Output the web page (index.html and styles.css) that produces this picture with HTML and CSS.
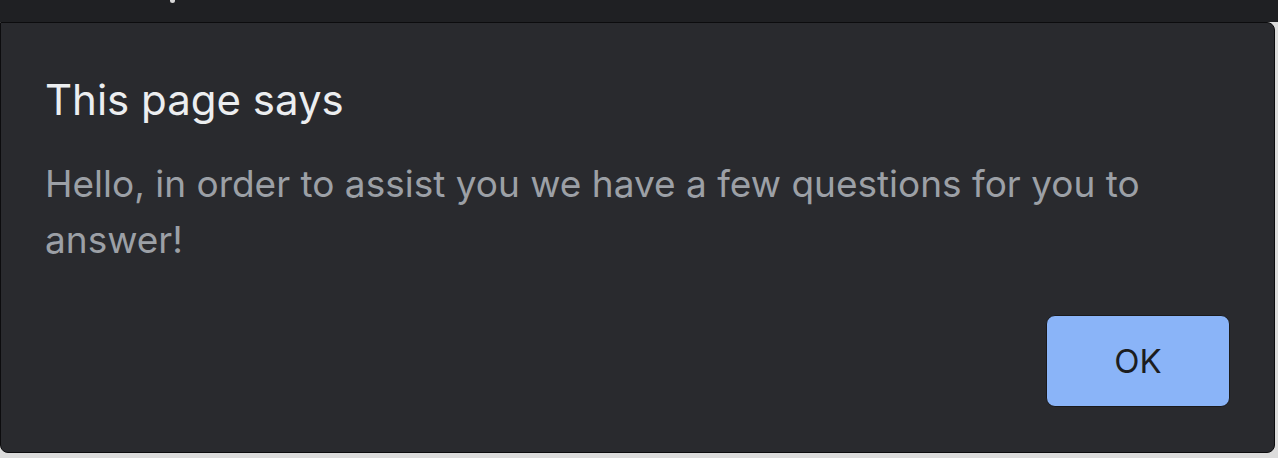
FILE: index.html
```html
<!DOCTYPE html>
<html lang="en">
<head>
<meta charset="utf-8">
<title>This page says</title>
<link rel="stylesheet" href="styles.css">
</head>
<body>
<div class="topbar"><span class="dot"></span></div>
<div class="dialog">
  <h1 class="title">This page says</h1>
  <p class="message">Hello, in order to assist you we have a few questions for you to answer!</p>
  <div class="actions">
    <button class="ok">OK</button>
  </div>
</div>
</body>
</html>
```

FILE: styles.css
```css
html, body {
  margin: 0;
  padding: 0;
}
body {
  width: 1278px;
  height: 458px;
  overflow: hidden;
  background: #dcdcdc;
  font-family: Inter, Roboto, "Liberation Sans", sans-serif;
}
.topbar {
  height: 22px;
  background: #1f2023;
  position: relative;
}
.dot {
  position: absolute;
  left: 170px;
  top: 0;
  width: 5px;
  height: 3px;
  border-radius: 0 0 3px 3px;
  background: #d8d8d8;
}
.dialog {
  box-sizing: border-box;
  width: 1275px;
  height: 431px;
  background: #292a2e;
  border: 1px solid #0c0c0e;
  border-radius: 0 8px 8px 8px;
  padding: 0 44px 0 44px;
  display: flex;
  flex-direction: column;
}
.title {
  margin: 50px 0 0 0;
  font-size: 42px;
  font-weight: 400;
  line-height: 54px;
  color: #eceef0;
}
.message {
  margin: 29px 0 0 0;
  font-size: 37px;
  line-height: 56px;
  color: #9ca0a6;
}
.actions {
  margin-top: auto;
  margin-bottom: 45px;
  display: flex;
  justify-content: flex-end;
}
.ok {
  width: 184px;
  height: 92px;
  background: #8ab4f8;
  border: 1px solid #1a1a1c;
  border-radius: 9px;
  font-family: Inter, Roboto, "Liberation Sans", sans-serif;
  font-size: 33px;
  color: #1c1d20;
  padding: 0;
}
```
